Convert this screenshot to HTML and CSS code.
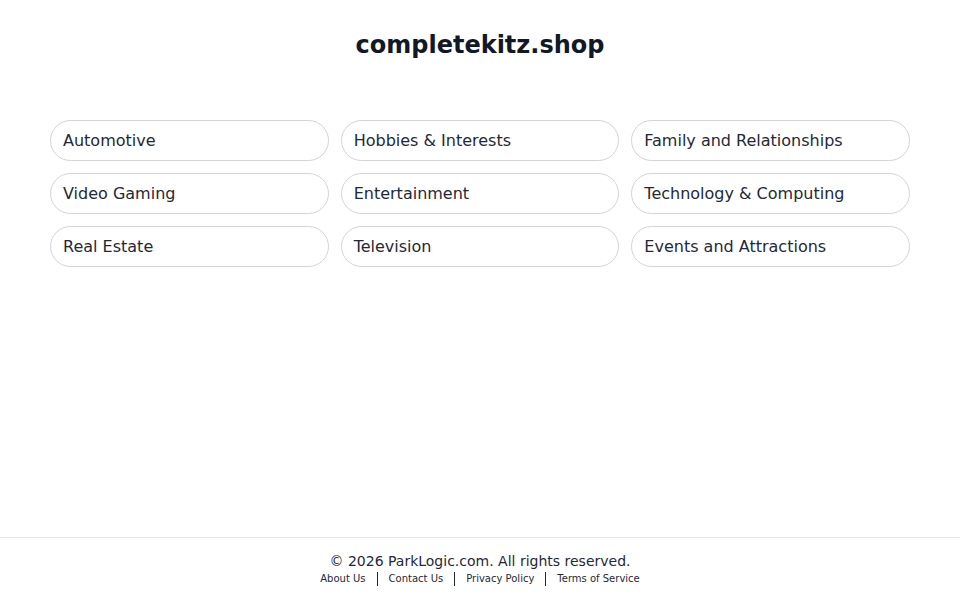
FILE: index.html
```html
<!DOCTYPE html>
<html lang="en">
<head>
<meta charset="utf-8">
<title>completekitz.shop</title>
<link rel="stylesheet" href="styles.css">
</head>
<body>
<div class="page">
  <main class="main">
    <h1 class="title">completekitz.shop</h1>
    <div class="grid">
      <a class="pill" href="#">Automotive</a>
      <a class="pill" href="#">Hobbies &amp; Interests</a>
      <a class="pill" href="#">Family and Relationships</a>
      <a class="pill" href="#">Video Gaming</a>
      <a class="pill" href="#">Entertainment</a>
      <a class="pill" href="#">Technology &amp; Computing</a>
      <a class="pill" href="#">Real Estate</a>
      <a class="pill" href="#">Television</a>
      <a class="pill" href="#">Events and Attractions</a>
    </div>
  </main>
  <footer class="footer">
    <div class="copy">© 2026 ParkLogic.com. All rights reserved.</div>
    <nav class="links">
      <a href="#">About Us</a><span class="sep"></span><a href="#">Contact Us</a><span class="sep"></span><a href="#">Privacy Policy</a><span class="sep"></span><a href="#">Terms of Service</a>
    </nav>
  </footer>
</div>
</body>
</html>
```
FILE: styles.css
```css
html, body {
  margin: 0;
  padding: 0;
  background: #ffffff;
  font-family: "DejaVu Sans", sans-serif;
  color: #1f2937;
}
.page {
  min-height: 100vh;
  display: flex;
  flex-direction: column;
}
.main {
  flex: 1;
  padding: 31px 50px 0;
}
.title {
  margin: 0;
  text-align: center;
  font-size: 24px;
  line-height: 28px;
  font-weight: bold;
  color: #111827;
}
.grid {
  margin-top: 61px;
  display: grid;
  grid-template-columns: repeat(3, 1fr);
  gap: 12px;
}
.pill {
  display: flex;
  align-items: center;
  height: 39px;
  padding: 0 12px;
  border: 1px solid #d4d4d8;
  border-radius: 21px;
  font-size: 16px;
  color: #1f2937;
  text-decoration: none;
}
.footer {
  border-top: 1px solid #e5e7eb;
  padding: 15px 0 14px;
  text-align: center;
}
.copy {
  font-size: 14px;
  line-height: 16px;
  color: #1f2937;
}
.links {
  margin-top: 3px;
  display: flex;
  justify-content: center;
  align-items: center;
  font-size: 10px;
  line-height: 14px;
}
.links a {
  color: #1f2937;
  text-decoration: none;
}
.sep {
  display: inline-block;
  width: 1px;
  height: 14px;
  background: #1f2937;
  margin: 0 11px;
}
```
